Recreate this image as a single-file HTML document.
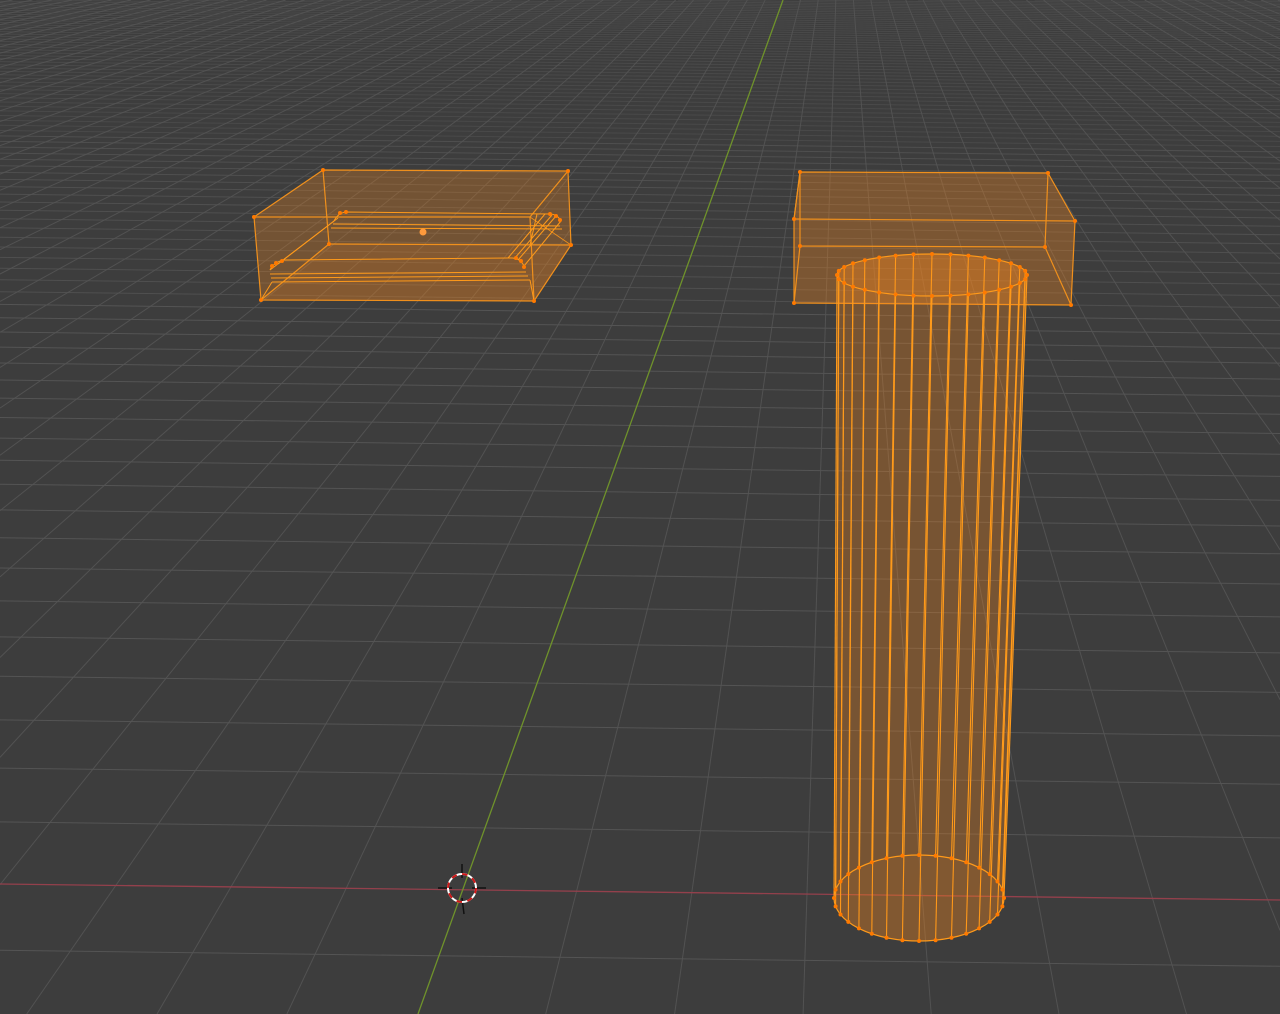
<!DOCTYPE html>
<html><head><meta charset="utf-8"><style>
html,body{margin:0;padding:0;background:#3d3d3d;overflow:hidden;width:1280px;height:1014px}
#wrap{position:absolute;left:0;top:0;width:1280px;height:1014px;overflow:hidden}
svg{display:block;overflow:hidden}
</style></head><body>
<div id="wrap">
<svg id="s" width="1280" height="1014" viewBox="0 0 1280 1014" xmlns="http://www.w3.org/2000/svg">
<rect width="1280" height="1014" fill="#3d3d3d"/>
<g id="grid" stroke="#545454" stroke-width="1" fill="none"></g>
<line x1="0" y1="884" x2="1280" y2="900" stroke="#94404c" stroke-width="1.3"/>
<line x1="783" y1="0" x2="418" y2="1014" stroke="#6f922b" stroke-width="1.3"/>

<g stroke="#f0901c" stroke-width="1.2" stroke-linejoin="round">
<polygon points="323,170 568,171 571,245 534,301 261,300 254,217" fill="rgba(255,140,30,0.28)"/>
<polygon points="329,244 571,245 534,301 261,300" fill="rgba(255,140,30,0.12)" stroke="none"/>
<polyline points="254,217 530,217 534,301" fill="none"/>
<line x1="530" y1="217" x2="568" y2="171"/>
<line x1="323" y1="170" x2="329" y2="244"/>
<line x1="329" y1="244" x2="571" y2="245"/>
<line x1="329" y1="244" x2="261" y2="300"/>
<line x1="530" y1="217" x2="571" y2="245" stroke-width="0.8"/>
<g stroke="#ff9a1a" stroke-width="1" fill="none">
<path d="M334,221 Q338,213 346,212 L550,214 Q557,214 561,221"/>
<path d="M333,224 L560,226"/>
<path d="M331,228 L562,229"/>
<path d="M270,270 Q274,262 284,260 L512,258 Q520,258 524,266"/>
<path d="M270,274 L526,272"/>
<path d="M271,278 L528,276"/>
<path d="M272,282 L530,280"/>
<path d="M334,221 L270,270"/>
<path d="M338,218 L278,264"/>
<path d="M561,221 L524,266"/>
<path d="M556,216 L518,260"/>
<path d="M552,215 L514,259"/>
<path d="M545,214 L508,258"/>
<path d="M537,214 L530,245"/>
<path d="M272,282 L261,300"/>
<path d="M530,280 L534,301"/>
</g>
</g>
<g fill="#ff7a00">
<circle cx="323" cy="170" r="2"/><circle cx="568" cy="171" r="2"/><circle cx="254" cy="217" r="2"/>
<circle cx="571" cy="245" r="2"/><circle cx="261" cy="300" r="2"/><circle cx="534" cy="301" r="2"/>
<circle cx="329" cy="244" r="2"/>
<circle cx="340" cy="213" r="2"/><circle cx="346" cy="212" r="2"/><circle cx="550" cy="214" r="2"/><circle cx="556" cy="216" r="2"/><circle cx="560" cy="220" r="2"/>
<circle cx="272" cy="266" r="2"/><circle cx="276" cy="263" r="2"/><circle cx="282" cy="261" r="2"/><circle cx="516" cy="258" r="2"/><circle cx="521" cy="261" r="2"/><circle cx="524" cy="267" r="2"/>
<circle cx="423" cy="232" r="3.5" fill="#ff9a3c"/>
</g>

<g stroke="#f0901c" stroke-width="1.2" stroke-linejoin="round">
<polygon points="800,172 1048,173 1075,221 1071,305 794,303 794,219" fill="rgba(255,140,30,0.32)"/>
<polyline points="794,219 1075,221" fill="none"/>
<polyline points="800,172 800,246 1045,247 1048,173" fill="none"/>
<line x1="800" y1="246" x2="794" y2="303"/>
<line x1="1045" y1="247" x2="1071" y2="305"/>
<line x1="800" y1="172" x2="794" y2="219"/>
</g>
<g fill="#ff7a00">
<circle cx="800" cy="172" r="2"/><circle cx="1048" cy="173" r="2"/><circle cx="1075" cy="221" r="2"/><circle cx="794" cy="219" r="2"/>
<circle cx="800" cy="246" r="2"/><circle cx="1045" cy="247" r="2"/><circle cx="794" cy="303" r="2"/><circle cx="1071" cy="305" r="2"/>
</g>

<g id="cyl"></g>

<g transform="translate(462,888)">
<line x1="0" y1="-24" x2="0" y2="-10" stroke="#111" stroke-width="1.5"/>
<line x1="0" y1="10" x2="2" y2="26" stroke="#111" stroke-width="1.5"/>
<line x1="-24" y1="0" x2="-10" y2="0" stroke="#111" stroke-width="1.5"/>
<line x1="10" y1="0" x2="24" y2="0" stroke="#111" stroke-width="1.5"/>
<circle r="14" fill="none" stroke="#ffffff" stroke-width="2"/>
<circle r="14" fill="none" stroke="#d01818" stroke-width="2" stroke-dasharray="5.5 5.5"/>
</g>
</svg>
</div>
<script>
(function(){
var NS="http://www.w3.org/2000/svg";
var g=document.getElementById('grid');
var b=0.0607,VX=841,VY=-161,W=1280,H=1014;
function P(u,v){var w=1+b*v;return [(462+115*u+VX*b*v)/w,(888+1.44*u+VY*b*v)/w];}
function clip(p,q){var x0=p[0],y0=p[1],dx=q[0]-x0,dy=q[1]-y0,t0=0,t1=1;
var P_=[-dx,dx,-dy,dy],Q=[x0,W-x0,y0,H-y0];
for(var i=0;i<4;i++){if(P_[i]==0){if(Q[i]<0)return null;}else{var r=Q[i]/P_[i];if(P_[i]<0){if(r>t1)return null;if(r>t0)t0=r;}else{if(r<t0)return null;if(r<t1)t1=r;}}}
return [[x0+t0*dx,y0+t0*dy],[x0+t1*dx,y0+t1*dy]];}
function L(p,q,op){var c=clip(p,q);if(!c)return;p=c[0];q=c[1];var l=document.createElementNS(NS,'line');l.setAttribute('x1',p[0].toFixed(1));l.setAttribute('y1',p[1].toFixed(1));l.setAttribute('x2',q[0].toFixed(1));l.setAttribute('y2',q[1].toFixed(1));if(op<1)l.setAttribute('stroke-opacity',op);g.appendChild(l);}
for(var v=-3;v<=95;v++){if(v==0)continue;L(P(-200,v),P(200,v),v>40?0.55:(v>20?0.8:1));}
for(var u=-60;u<=40;u++){if(u==0)continue;L(P(u,-3),P(u,95),0.9);}
var c=document.getElementById('cyl');var N=32,s='';
var T=[932,275,95,21],B=[919,898,85,43];
s+='<path d="M'+(T[0]-T[2])+','+T[1]+' A'+T[2]+','+T[3]+' 0 0 1 '+(T[0]+T[2])+','+T[1]+' L'+(B[0]+B[2])+','+B[1]+' A'+B[2]+','+B[3]+' 0 0 1 '+(B[0]-B[2])+','+B[1]+' Z" fill="rgba(255,140,30,0.3)" stroke="none"/>';
var dots='';
for(var i=0;i<N;i++){var a=2*Math.PI*i/N;var tx=T[0]+T[2]*Math.cos(a),ty=T[1]+T[3]*Math.sin(a),bx=B[0]+B[2]*Math.cos(a),by=B[1]+B[3]*Math.sin(a);
s+='<line x1="'+tx.toFixed(1)+'" y1="'+ty.toFixed(1)+'" x2="'+bx.toFixed(1)+'" y2="'+by.toFixed(1)+'" stroke="#ff9a1a" stroke-width="1.1"/>';
dots+='<circle cx="'+tx.toFixed(1)+'" cy="'+ty.toFixed(1)+'" r="2" fill="#ff7a00"/><circle cx="'+bx.toFixed(1)+'" cy="'+by.toFixed(1)+'" r="2" fill="#ff7a00"/>';}
s+='<ellipse cx="'+T[0]+'" cy="'+T[1]+'" rx="'+T[2]+'" ry="'+T[3]+'" fill="rgba(255,140,30,0.1)" stroke="#ff9a1a" stroke-width="1.2"/>';
s+='<ellipse cx="'+B[0]+'" cy="'+B[1]+'" rx="'+B[2]+'" ry="'+B[3]+'" fill="rgba(255,140,30,0.08)" stroke="#ff9a1a" stroke-width="1.2"/>';
c.innerHTML=s+dots;
})();
</script>
</body></html>
